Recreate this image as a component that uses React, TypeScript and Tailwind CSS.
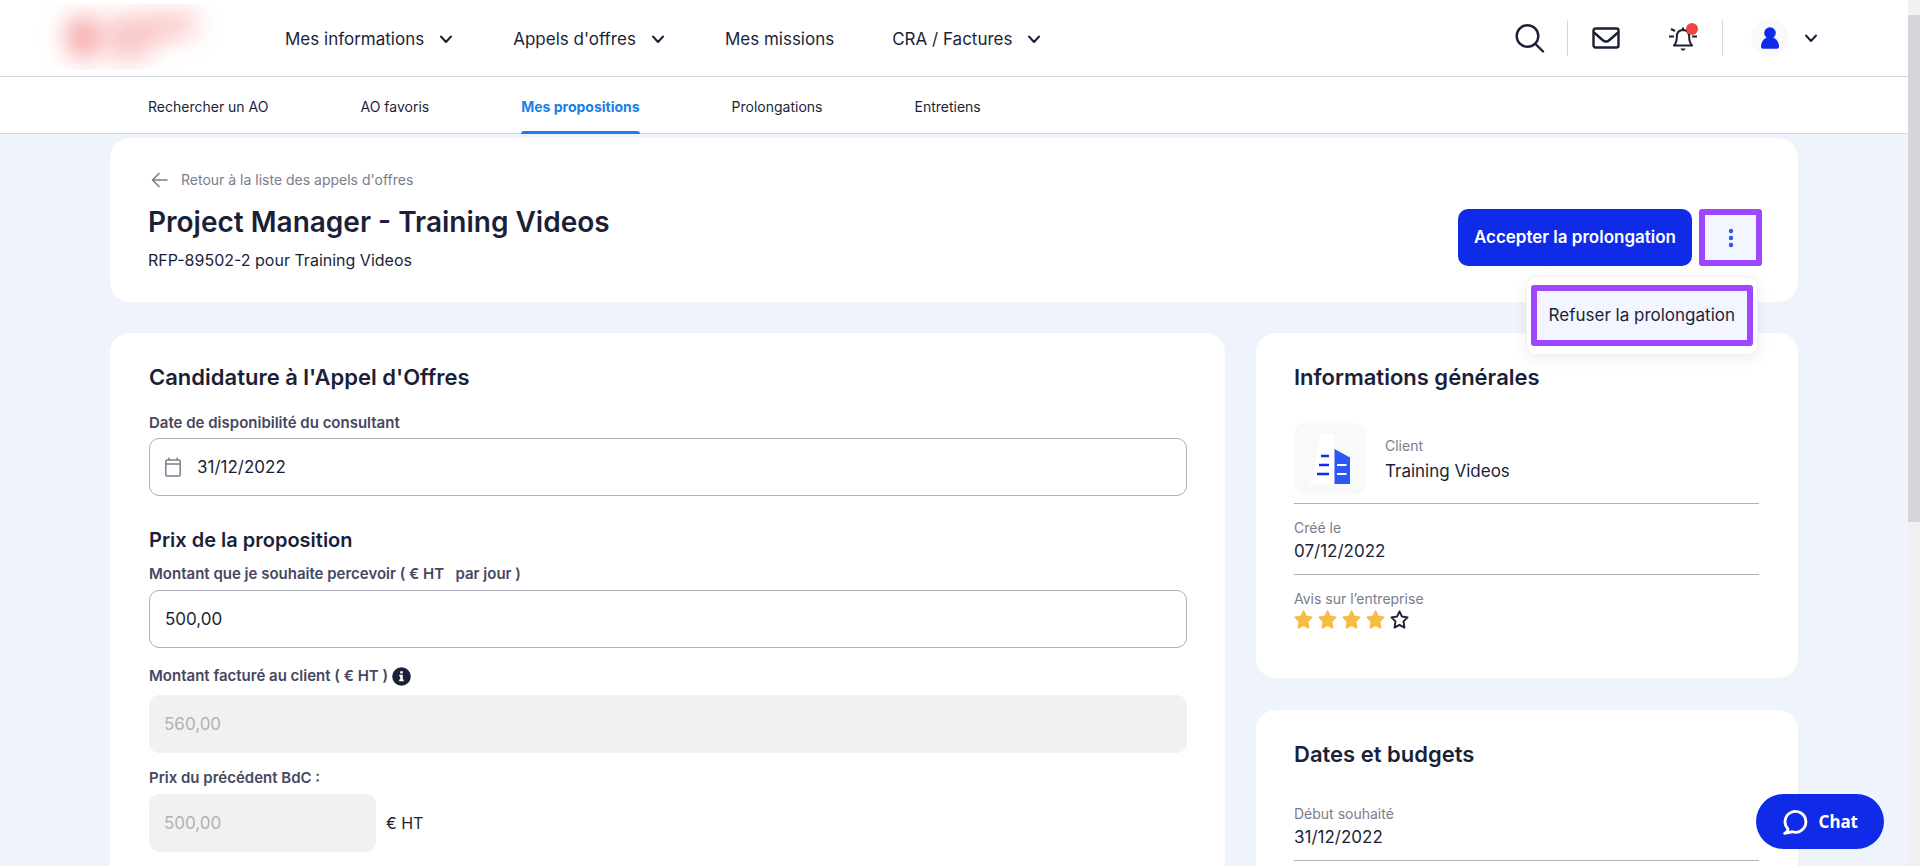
import React, { useState } from "react";

const textColor = "text-[#1b1f38]";

function Chevron() {
  return (
    <svg className="size-[18px]" viewBox="0 0 18 18" fill="none" stroke="currentColor" strokeWidth="2" strokeLinecap="round" strokeLinejoin="round">
      <path d="M4 6.500 9 12l5-5.500" />
    </svg>
  );
}

function Logo() {
  return (
    <svg className="h-[66px] w-[190px]" viewBox="0 0 190 66" role="img" aria-label="Logo">
      <defs>
        <filter id="logoBlur" x="-50%" y="-80%" width="200%" height="260%">
          <feGaussianBlur stdDeviation="12" />
        </filter>
      </defs>
      <g filter="url(#logoBlur)" fill="#f58080">
        <ellipse cx="55" cy="33" rx="18" ry="22" opacity="0.7" />
        <path d="M80 12 168 8v22l-40 8-14 18H80z" opacity="0.45" />
      </g>
    </svg>
  );
}

function Star({ filled }: { filled: boolean }) {
  return (
    <svg className="size-[19px]" viewBox="0 0 20 20" fill={filled ? "#f5bd41" : "none"} stroke={filled ? "#f5bd41" : "#1b1f38"} strokeWidth="2" strokeLinejoin="round">
      <path d="m10 1.500 2.600 5.400 5.900.9-4.300 4.200 1 6.500L10 15.600l-5.200 2.900 1-6.500L1.500 7.800l5.900-.9z" />
    </svg>
  );
}

function MainNav() {
  const items = [
    { label: "Mes informations", menu: true },
    { label: "Appels d'offres", menu: true },
    { label: "Mes missions", menu: false },
    { label: "CRA / Factures", menu: true },
  ];

  return (
    <nav className="flex-1 pt-[2px]">
      <ul className="flex items-center gap-[58px] text-[17px] leading-6">
        {items.map((item) => (
          <li key={item.label}>
            <a className="flex items-center gap-[13px] whitespace-nowrap" href="#">
              {item.label}
              {item.menu && <Chevron />}
            </a>
          </li>
        ))}
      </ul>
    </nav>
  );
}

function Header() {
  return (
    <header className="flex h-[77px] items-center border-b border-[#d6d7dc] bg-white pr-[88px] pl-7">
      <div className="mr-[67px] pb-[2px]">
        <Logo />
      </div>
      <MainNav />
      <div className="flex items-center">
        <button type="button" aria-label="Rechercher" className="mr-[22px]">
          <svg className="size-[30px]" viewBox="0 0 30 30" fill="none" stroke="currentColor" strokeWidth="2.400" strokeLinecap="round">
            <circle cx="12.500" cy="13" r="10.800" />
            <path d="m20.500 21 7.500 7.500" />
          </svg>
        </button>
        <span className="h-9 w-px bg-[#d6d7dc]" />
        <button type="button" aria-label="Messages" className="ml-6">
          <svg className="h-[22px] w-7" viewBox="0 0 28 22" fill="none" stroke="currentColor" strokeWidth="2.400" strokeLinejoin="round">
            <rect x="1.500" y="1.500" width="25" height="19" rx="2" />
            <path d="m2 5.500 8.500 7.500c2.300 2 4.700 2 7 0L26 5.500" />
          </svg>
        </button>
        <button type="button" aria-label="Notifications" className="relative ml-12">
          <svg className="size-[30px]" viewBox="0 0 30 30" fill="none" stroke="currentColor" strokeWidth="2" strokeLinejoin="round">
            <path d="M6 22.500c1.800-1.800 2.800-4 2.800-8.500 0-4.500 2.500-7 6.200-7s6.200 2.500 6.200 7c0 4.500 1 6.700 2.800 8.500z" />
            <path d="M15 7V4.500M1 13.500h5M24 13.500h5M3 6l4 2" />
            <path d="M12.500 25.500h5c-.5 1.500-1.300 2-2.500 2s-2-.5-2.500-2z" fill="currentColor" stroke="none" />
          </svg>
          <span className="absolute top-0 right-0 size-3 rounded-full bg-[#f04444]" />
        </button>
        <span className="ml-6 h-9 w-px bg-[#d6d7dc]" />
        <button type="button" aria-label="Mon compte" className="ml-7 flex items-center gap-[13px]">
          <span className="flex size-[38px] items-center justify-center rounded-full bg-[#f8faf9]">
            <svg className="h-[22px] w-[18px]" viewBox="0 0 18 22" fill="#0f2be8">
              <circle cx="9" cy="6" r="5.800" />
              <path d="M5.500 10.500h7C16 12.500 18 15.500 18 19.500c0 1.500-.8 2.200-2 2.200H2c-1.200 0-2-.7-2-2.200 0-4 2-7 5.500-9z" />
            </svg>
          </span>
          <Chevron />
        </button>
      </div>
    </header>
  );
}

function SubNav() {
  const links = ["Rechercher un AO", "AO favoris", "Mes propositions", "Prolongations", "Entretiens"];
  const active = "Mes propositions";

  return (
    <nav className="h-[57px] border-b border-[#d6d7dc] bg-white pl-[148px]">
      <ul className="flex gap-[92px] text-sm leading-5">
        {links.map((link) => (
          <li key={link} className="relative flex h-[57px] items-center pt-[2px] whitespace-nowrap">
            <a className={link === active ? "font-bold text-[#1a80e5]" : ""} href="#">{link}</a>
            {link === active && <span className="absolute inset-x-0 bottom-0 h-[3px] rounded-t bg-[#1a80e5]" />}
          </li>
        ))}
      </ul>
    </nav>
  );
}

function OfferHeader() {
  const [menuOpen, setMenuOpen] = useState(true);

  return (
    <section className="flex items-end justify-between rounded-[20px] bg-white pt-8 pr-9 pb-7 pl-[38px]">
      <div>
        <a className="flex items-center gap-3 text-sm leading-5 text-[#7b7c8c]" href="#">
          <svg className="ml-[3px] size-[18px]" viewBox="0 0 18 18" fill="none" stroke="currentColor" strokeWidth="1.600" strokeLinecap="round" strokeLinejoin="round">
            <path d="M16 9H2M8 2.500 1.500 9 8 15.500" />
          </svg>
          Retour à la liste des appels d'offres
        </a>
        <h1 className="mt-3 text-[28px] leading-10 font-semibold">Project Manager - Training Videos</h1>
        <p className="mt-1 text-base leading-7">RFP-89502-2 pour Training Videos</p>
      </div>
      <div className="relative mb-2 flex gap-[7px]">
        <button type="button" className="h-[57px] rounded-[10px] bg-[#0f2be8] px-4 text-[17px] font-semibold text-white">
          Accepter la prolongation
        </button>
        <button type="button" aria-label="Plus d'actions" onClick={() => setMenuOpen(!menuOpen)} className="flex h-[57px] w-[63px] items-center justify-center rounded-[3px] border-[6px] border-[#9e47ff] bg-[#f3f6fe]">
          <svg className="h-5 w-2" viewBox="0 0 8 20" fill="#2c56f6">
            <circle cx="4" cy="3" r="2.200" />
            <circle cx="4" cy="10" r="2.200" />
            <circle cx="4" cy="17" r="2.200" />
          </svg>
        </button>
        {menuOpen && (
          <div className="absolute top-[67px] right-1 z-10 rounded-[10px] border border-[#f1f1f4] bg-white px-1 py-2 shadow-[0_4px_16px_rgba(0,0,0,0.07)]">
            <button type="button" className="block h-[61px] rounded-[3px] border-[6px] border-[#9e47ff] bg-[#f3f6fe] px-3 text-[17px] whitespace-nowrap">
              Refuser la prolongation
            </button>
          </div>
        )}
      </div>
    </section>
  );
}

const labelClassName = "flex items-center gap-1 text-[15px] leading-5 font-semibold text-[#45485e]";
const disabledClassName = "block h-[58px] rounded-[10px] bg-[#f1f1f1] px-[15px] text-[17px] text-[#b1b1b3]";

function ApplicationForm() {
  return (
    <section className="rounded-[20px] bg-white pt-7 pr-[38px] pb-16 pl-[39px]">
      <h2 className="text-[22px] leading-8 font-semibold">Candidature à l'Appel d'Offres</h2>
      <form className="mt-5">
        <label className={labelClassName} htmlFor="date">Date de disponibilité du consultant</label>
        <div className="mt-[5px] flex h-[58px] items-center gap-4 rounded-[10px] border border-[#adafbb] px-[15px]">
          <svg className="h-5 w-4" viewBox="0 0 16 20" fill="none" stroke="#7b7c8c" strokeWidth="1.500">
            <rect x=".8" y="3" width="14.400" height="16" rx="1.500" />
            <path d="M1 7h14M4 .8V3M12 .8V3" />
          </svg>
          <input id="date" className="h-full flex-1 text-[17px] outline-none" type="text" defaultValue="31/12/2022" />
        </div>

        <h3 className="mt-7 text-xl leading-8 font-semibold">Prix de la proposition</h3>
        <label className={`mt-2 ${labelClassName}`} htmlFor="amount">
          Montant que je souhaite percevoir ( € HT &nbsp; par jour )
        </label>
        <input id="amount" className="mt-[6px] block h-[58px] w-full rounded-[10px] border border-[#adafbb] px-[15px] text-[17px] outline-none" type="text" defaultValue="500,00" />

        <label className={`mt-[18px] ${labelClassName}`} htmlFor="billed">
          Montant facturé au client ( € HT )
          <svg className="size-[19px]" viewBox="0 0 19 19">
            <circle cx="9.500" cy="9.500" r="9.300" fill="#1b1f38" />
            <path d="M8.200 4.200h2.600v2.300H8.200zM7.300 7.800h3.500v4.700h1v1.700H7.200v-1.700h1V9.500h-.9z" fill="#fff" />
          </svg>
        </label>
        <input id="billed" className={`mt-[9px] w-full ${disabledClassName}`} type="text" defaultValue="560,00" disabled />

        <label className={`mt-[15px] ${labelClassName}`} htmlFor="previous">Prix du précédent BdC :</label>
        <div className="mt-[6px] flex items-center gap-[10px]">
          <input id="previous" className={`w-[227px] ${disabledClassName}`} type="text" defaultValue="500,00" disabled />
          <span>€ HT</span>
        </div>
      </form>
    </section>
  );
}

function InfoRow({ label, value }: { label: string; value: string }) {
  return (
    <div className="border-b border-[#adafbb] pt-[14px] pb-[10px]">
      <dt className="text-sm leading-5 text-[#7b7c8c]">{label}</dt>
      <dd className="text-[17px] leading-[26px]">{value}</dd>
    </div>
  );
}

function GeneralInfo() {
  return (
    <section className="rounded-[20px] bg-white pt-7 pr-[39px] pb-[49px] pl-[38px]">
      <h2 className="text-[22px] leading-8 font-semibold">Informations générales</h2>
      <dl className="mt-[30px]">
        <div className="flex items-center gap-[19px] border-b border-[#adafbb] pb-2">
          <svg className="size-[72px]" viewBox="0 0 72 72">
            <rect width="72" height="72" rx="11" fill="#f8faf9" />
            <path d="M27.500 11H40v50H16z" fill="#fff" />
            <path d="M40.500 26 56 34.500V61H40.500z" fill="#2c56f6" />
            <path d="M27 33h8M25 42h10M23 51h12" stroke="#0f2be8" strokeWidth="2.400" />
            <path d="M43 42h9.500M43 51h9.500" stroke="#fff" strokeWidth="2" />
          </svg>
          <div className="pt-[2px]">
            <dt className="text-sm leading-5 text-[#7b7c8c]">Client</dt>
            <dd className="mt-[2px] text-[17px] leading-[26px]">Training Videos</dd>
          </div>
        </div>
        <InfoRow label="Créé le" value="07/12/2022" />
        <div className="pt-[14px]">
          <dt className="text-sm leading-5 text-[#7b7c8c]">Avis sur l’entreprise</dt>
          <dd className="mt-px flex gap-[5px]" aria-label="4 sur 5">
            {[1, 2, 3, 4, 5].map((n) => <Star key={n} filled={n <= 4} />)}
          </dd>
        </div>
      </dl>
    </section>
  );
}

function DatesAndBudgets() {
  return (
    <section className="rounded-[20px] bg-white pt-7 pr-[39px] pb-12 pl-[38px]">
      <h2 className="text-[22px] leading-8 font-semibold">Dates et budgets</h2>
      <dl className="mt-5">
        <InfoRow label="Début souhaité" value="31/12/2022" />
      </dl>
    </section>
  );
}

function ChatButton() {
  return (
    <button type="button" className="fixed right-9 bottom-[17px] z-20 flex h-[55px] items-center gap-[10px] rounded-full bg-[#0f2be8] px-[26px] font-['Noto_Sans',sans-serif] text-[17px] font-bold text-white">
      <svg className="size-[26px]" viewBox="0 0 24 24" fill="none" stroke="currentColor" strokeWidth="2.600" strokeLinecap="round" strokeLinejoin="round">
        <path d="M5.500 18.500A9.600 9.600 0 1 1 9.500 21L2.500 22.500c2-.8 3-2.200 3-4z" />
      </svg>
      Chat
    </button>
  );
}

export default function App() {
  return (
    <div className={`flex h-screen overflow-hidden bg-[#eff4fc] font-['Inter',sans-serif] ${textColor}`}>
      <div className="min-w-0 flex-1">
        <Header />
        <SubNav />
        <main className="px-[110px] pt-1">
          <OfferHeader />
          <div className="mt-[31px] grid grid-cols-[minmax(0,1fr)_542px] items-start gap-[31px]">
            <ApplicationForm />
            <div className="flex flex-col gap-8">
              <GeneralInfo />
              <DatesAndBudgets />
            </div>
          </div>
        </main>
      </div>
      <div className="w-3 bg-[#f1f1f3] pt-[15px]">
        <div className="h-[507px] bg-[#d6d5da]" />
      </div>
      <ChatButton />
    </div>
  );
}
